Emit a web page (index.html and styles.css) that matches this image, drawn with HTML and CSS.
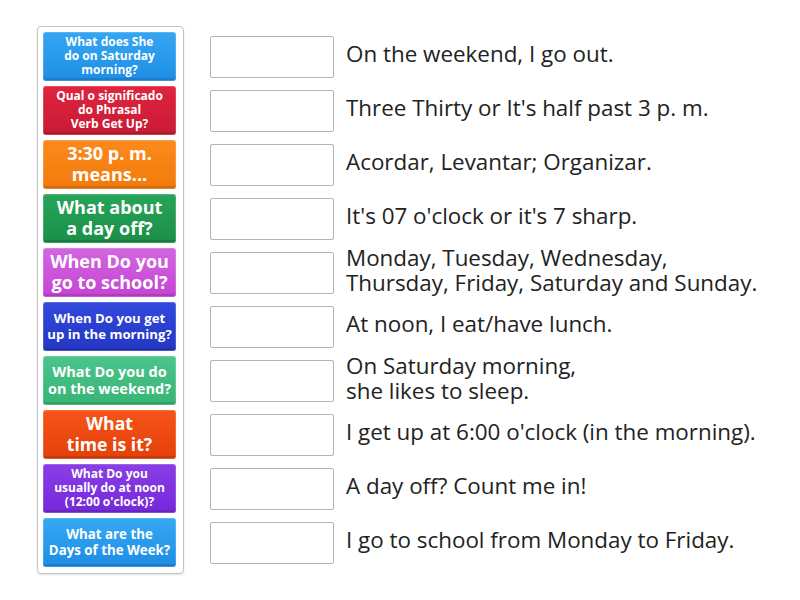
FILE: index.html
```html
<!DOCTYPE html>
<html>
<head>
<meta charset="utf-8">
<link rel="stylesheet" href="styles.css">
</head>
<body>
<div class="page">
  <div class="tiles">
    <div class="tile c1 t1">What does She<br>do on Saturday<br>morning?</div>
    <div class="tile c2 t2">Qual o significado<br>do Phrasal<br>Verb Get Up?</div>
    <div class="tile c3 t3">3:30 p. m.<br>means...</div>
    <div class="tile c4 t4">What about<br>a day off?</div>
    <div class="tile c5 t5">When Do you<br>go to school?</div>
    <div class="tile c6 t6">When Do you get<br>up in the morning?</div>
    <div class="tile c7 t7">What Do you do<br>on the weekend?</div>
    <div class="tile c8 t8">What<br>time is it?</div>
    <div class="tile c9 t9">What Do you<br>usually do at noon<br>(12:00 o'clock)?</div>
    <div class="tile c10 t10">What are the<br>Days of the Week?</div>
  </div>
  <div class="rows">
    <div class="row"><div class="box"></div><div class="ans">On the weekend, I go out.</div></div>
    <div class="row"><div class="box"></div><div class="ans">Three Thirty or It's half past 3 p. m.</div></div>
    <div class="row"><div class="box"></div><div class="ans">Acordar, Levantar; Organizar.</div></div>
    <div class="row"><div class="box"></div><div class="ans">It's 07 o'clock or it's 7 sharp.</div></div>
    <div class="row"><div class="box"></div><div class="ans">Monday, Tuesday, Wednesday,<br>Thursday, Friday, Saturday and Sunday.</div></div>
    <div class="row"><div class="box"></div><div class="ans">At noon, I eat/have lunch.</div></div>
    <div class="row"><div class="box"></div><div class="ans">On Saturday morning,<br>she likes to sleep.</div></div>
    <div class="row"><div class="box"></div><div class="ans">I get up at 6:00 o'clock (in the morning).</div></div>
    <div class="row"><div class="box"></div><div class="ans">A day off? Count me in!</div></div>
    <div class="row"><div class="box"></div><div class="ans">I go to school from Monday to Friday.</div></div>
  </div>
</div>
</body>
</html>
```
FILE: styles.css
```css
html, body {
  margin: 0;
  padding: 0;
  background: #fff;
}
body {
  font-family: "Open Sans", "Liberation Sans", sans-serif;
  width: 800px;
  height: 600px;
  overflow: hidden;
}
.page {
  display: flex;
  align-items: flex-start;
  padding: 26px 0 0 37px;
}
.tiles {
  display: flex;
  flex-direction: column;
  gap: 5px;
  width: 134px;
  padding: 5px 6px 6px 5px;
  border: 1px solid #c4c4c4;
  border-radius: 4px;
  box-shadow: 0 1px 2px rgba(0,0,0,0.12);
}
.tile {
  height: 49px;
  box-sizing: border-box;
  width: 133px;
  display: flex;
  align-items: center;
  justify-content: center;
  text-align: center;
  color: #fff;
  font-weight: 700;
  border-radius: 3px;
  white-space: nowrap;
  padding-bottom: 1px;
  box-shadow: inset 0 0 0 1px rgba(255,255,255,0.18), inset 0 -3px 0 rgba(0,0,0,0.12);
}
.t1 { font-size: 12px; line-height: 14px; }
.t2 { font-size: 12px; line-height: 14px; }
.t3 { font-size: 18px; line-height: 21px; }
.t4 { font-size: 18px; line-height: 21px; }
.t5 { font-size: 18px; line-height: 21px; }
.t6 { font-size: 13.2px; line-height: 16px; }
.t7 { font-size: 14.5px; line-height: 17px; }
.t8 { font-size: 17.6px; line-height: 21px; }
.t9 { font-size: 12px; line-height: 14px; }
.t10 { font-size: 13.3px; line-height: 16px; }
.c1 { background: linear-gradient(#36a6f2, #1e8ee6); }
.c2 { background: linear-gradient(#e0243f, #c81a34); }
.c3 { background: linear-gradient(#fb8a1c, #f27a0c); }
.c4 { background: linear-gradient(#27a558, #1b8e48); }
.c5 { background: linear-gradient(#d465e0, #c444d4); }
.c6 { background: linear-gradient(#3249dc, #2436c4); }
.c7 { background: linear-gradient(#4cc58a, #38b476); }
.c8 { background: linear-gradient(#f65418, #e4400a); }
.c9 { background: linear-gradient(#8a3ee6, #7428da); }
.c10 { background: linear-gradient(#36a8f2, #1d8de6); }
.rows {
  display: flex;
  flex-direction: column;
  gap: 5px;
  margin-left: 26px;
  padding-top: 6px;
}
.row {
  height: 49px;
  display: flex;
  align-items: center;
}
.box {
  width: 122px;
  height: 40px;
  border: 1px solid #b4b4b4;
  border-radius: 2px;
  flex: none;
}
.ans {
  margin-left: 12px;
  font-size: 22.4px;
  line-height: 25px;
  color: #222;
  white-space: nowrap;
  padding-bottom: 6px;
}
```
